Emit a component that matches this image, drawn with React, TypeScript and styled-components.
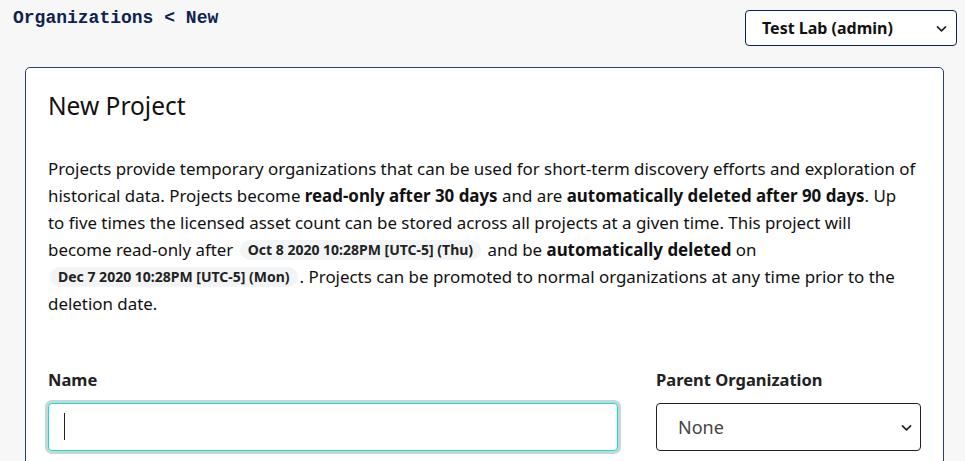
import React from "react";
import styled, { createGlobalStyle } from "styled-components";

const GlobalStyle = createGlobalStyle`
  html, body {
    margin: 0;
    padding: 0;
    background: #f7f7f7;
  }
  body {
    font-family: "Noto Sans", "Open Sans", sans-serif;
    color: #111;
  }
`;

const Chevron: React.FC<{ size?: number }> = ({ size = 12 }) => (
  <svg width={size} height={size} viewBox="0 0 16 16" fill="none">
    <path
      d="M3 6l5 5 5-5"
      stroke="#222"
      strokeWidth="2"
      strokeLinecap="round"
      strokeLinejoin="round"
    />
  </svg>
);

const App: React.FC = () => {
  return (
    <Page>
      <GlobalStyle />
      <TopBar>
        <Breadcrumb>Organizations &lt; New</Breadcrumb>
        <OrgSelect>
          <span>Test Lab (admin)</span>
          <Chevron size={13} />
        </OrgSelect>
      </TopBar>
      <Card>
        <Title>New Project</Title>
        <Intro>
          Projects provide temporary organizations that can be used for
          short-term discovery efforts and exploration of
          <br />
          historical data. Projects become <b>read-only after 30 days</b> and
          are <b>automatically deleted after 90 days</b>. Up
          <br />
          to five times the licensed asset count can be stored across all
          projects at a given time. This project will
          <br />
          become read-only after{" "}
          <DateBadge>Oct 8 2020 10:28PM [UTC-5] (Thu)</DateBadge> and be{" "}
          <b>automatically deleted</b> on
          <br />
          <DateBadge>Dec 7 2020 10:28PM [UTC-5] (Mon)</DateBadge>. Projects can
          be promoted to normal organizations at any time prior to the
          <br />
          deletion date.
        </Intro>
        <FormRow>
          <Field>
            <Label>Name</Label>
            <InputWrap>
              <TextInput type="text" />
            </InputWrap>
          </Field>
          <Field>
            <Label>Parent Organization</Label>
            <ParentSelect>
              <span>None</span>
              <Chevron size={13} />
            </ParentSelect>
          </Field>
        </FormRow>
      </Card>
    </Page>
  );
};

const Page = styled.div`
  min-height: 461px;
  padding: 0 21px 0 25px;
  box-sizing: border-box;
`;

const TopBar = styled.div`
  display: flex;
  justify-content: space-between;
  align-items: flex-start;
  margin: 0 -13px 0 -12px;
  padding-top: 10px;
  height: 67px;
  box-sizing: border-box;
`;

const Breadcrumb = styled.div`
  font-family: "Liberation Mono", "Courier New", monospace;
  font-weight: bold;
  font-size: 18px;
  line-height: 16px;
  color: #0d2350;
`;

const OrgSelect = styled.div`
  display: flex;
  align-items: center;
  justify-content: space-between;
  width: 212px;
  height: 36px;
  box-sizing: border-box;
  padding: 0 8px 0 16px;
  background: #fff;
  border: 1px solid #0d2350;
  border-radius: 4px;
  font-weight: 700;
  font-size: 16px;
  color: #111;
`;

const Card = styled.div`
  background: #fff;
  border: 1px solid #2c3e78;
  border-radius: 5px;
  padding: 21px 22px 40px 22px;
`;

const Title = styled.h2`
  margin: 0 0 32px;
  font-size: 24.5px;
  font-weight: 400;
  line-height: 34px;
  color: #111;
`;

const Intro = styled.p`
  margin: 0 0 52px;
  font-size: 16.9px;
  line-height: 27px;
  color: #111;
  b {
    font-weight: 700;
  }
`;

const DateBadge = styled.span`
  display: inline-block;
  vertical-align: 1px;
  background: #f3f4f6;
  border-radius: 10px;
  padding: 0 8px;
  font-size: 14px;
  font-weight: 700;
  line-height: 20px;
  color: #222;
  margin: 0 2px;
`;

const FormRow = styled.div`
  display: grid;
  grid-template-columns: 1fr 265px;
  column-gap: 38px;
`;

const Field = styled.div`
  display: flex;
  flex-direction: column;
`;

const Label = styled.label`
  font-weight: 700;
  font-size: 16.5px;
  line-height: 22px;
  color: #222;
  margin-bottom: 12px;
`;

const InputWrap = styled.div`
  position: relative;
  &::after {
    content: "";
    position: absolute;
    left: 16px;
    top: 10px;
    width: 1px;
    height: 27px;
    background: #222;
  }
`;

const TextInput = styled.input`
  width: 100%;
  height: 48px;
  box-sizing: border-box;
  border: 1px solid #18dcdc;
  border-radius: 4px;
  box-shadow: 0 0 0 3px #c2d9d8;
  outline: none;
  padding: 0 16px;
  font-size: 17px;
  caret-color: transparent;
  background: #fff;
`;

const ParentSelect = styled.div`
  display: flex;
  align-items: center;
  justify-content: space-between;
  height: 48px;
  box-sizing: border-box;
  border: 1px solid #222;
  border-radius: 4px;
  padding: 0 7px 0 21px;
  font-size: 18px;
  color: #444;
  background: #fff;
`;

export default App;
